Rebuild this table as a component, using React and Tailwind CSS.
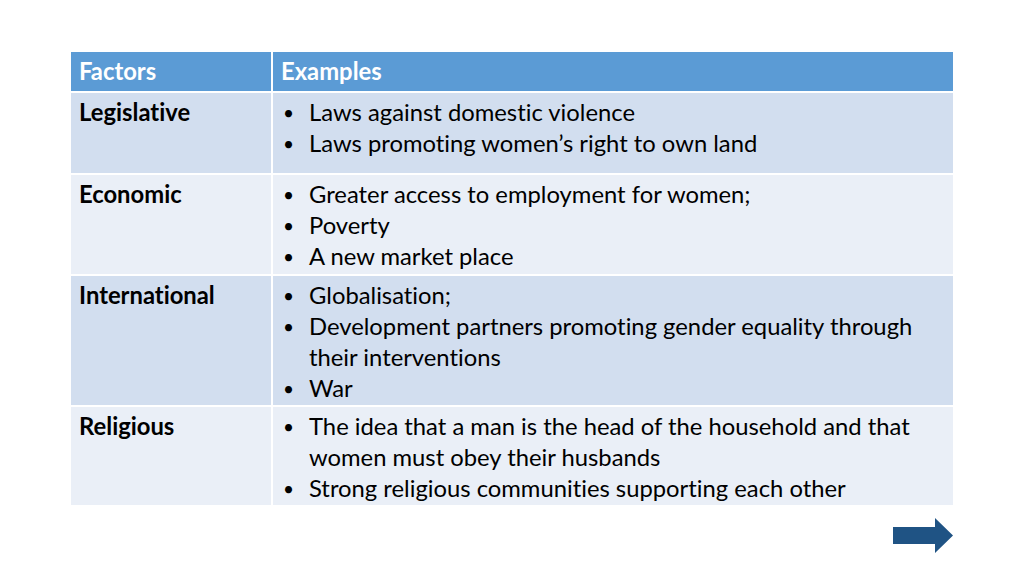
export default function App() {
  const rows = [
    {
      factor: "Legislative",
      h: "h-[80px]",
      bg: "bg-[#d2deef]",
      items: [["Laws against domestic violence"], ["Laws promoting women’s right to own land"]],
    },
    {
      factor: "Economic",
      h: "h-[99px]",
      bg: "bg-[#eaeff7]",
      items: [["Greater access to employment for women;"], ["Poverty"], ["A new market place"]],
    },
    {
      factor: "International",
      h: "h-[129px]",
      bg: "bg-[#d2deef]",
      items: [
        ["Globalisation;"],
        ["Development partners promoting gender equality through", "their interventions"],
        ["War"],
      ],
    },
    {
      factor: "Religious",
      h: "h-[98px]",
      bg: "bg-[#eaeff7]",
      items: [
        ["The idea that a man is the head of the household and that", "women must obey their husbands"],
        ["Strong religious communities supporting each other"],
      ],
    },
  ];

  return (
    <div className="w-[1024px] h-[576px] bg-white relative overflow-hidden font-['Lato',sans-serif] text-[23.8px] leading-[31px] text-black [font-variant-ligatures:none]">
      <div className="pt-[52px] pl-[71px]">
        <div className="w-[882px] grid grid-cols-[200px_680px] gap-[2px] bg-white">
          <div className="h-[39px] bg-[#5b9bd5] text-white font-bold px-[8px] pt-[4px]">Factors</div>
          <div className="h-[39px] bg-[#5b9bd5] text-white font-bold px-[8px] pt-[4px]">Examples</div>
          {rows.map((r) => (
            <>
              <div key={r.factor + "f"} className={`${r.h} ${r.bg} font-bold px-[8px] pt-[4px]`}>
                {r.factor}
              </div>
              <div key={r.factor + "e"} className={`${r.h} ${r.bg} pl-[10px] pt-[4px]`}>
                {r.items.map((lines, i) => (
                  <div key={i} className="flex">
                    <span className="w-[26px] shrink-0 text-[19px]">•</span>
                    <div>
                      {lines.map((l, j) => (
                        <div key={j} className="whitespace-nowrap">{l}</div>
                      ))}
                    </div>
                  </div>
                ))}
              </div>
            </>
          ))}
        </div>
      </div>

      {/* next arrow */}
      <svg className="absolute left-[893px] top-[518px]" width="61" height="36" viewBox="0 0 61 36">
        <polygon points="0,9 42,9 42,0 60,17.5 42,35 42,26 0,26" fill="#1f5384" />
      </svg>
    </div>
  );
}
